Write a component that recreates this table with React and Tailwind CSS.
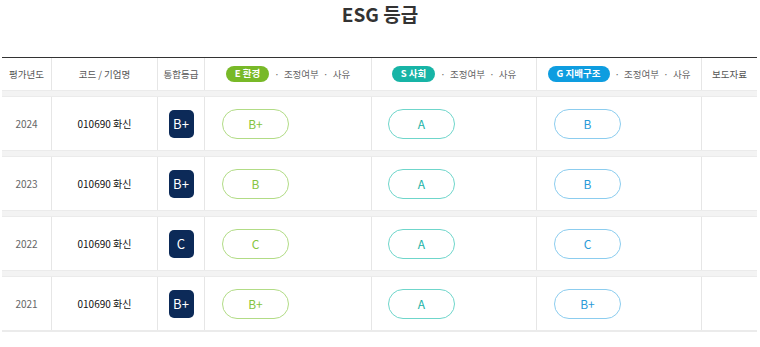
import React from 'react';

const rows = [
    { year: '2024', total: 'B+', e: 'B+', s: 'A', g: 'B' },
    { year: '2023', total: 'B+', e: 'B', s: 'A', g: 'B' },
    { year: '2022', total: 'C', e: 'C', s: 'A', g: 'C' },
    { year: '2021', total: 'B+', e: 'B+', s: 'A', g: 'B+' },
];

const cols = 'grid grid-cols-[50px_106px_47px_167px_165px_165px_55px]';
const cell = 'border-r border-[#e6e6e6] flex items-center';

function HeadTag({ label, color }) {
    return (
        <div className="flex items-center justify-center gap-[5px] w-full">
            <span className={`${color} text-white text-[9.5px] font-bold h-[16px] px-[9px] rounded-full flex items-center leading-none`}>{label}</span>
            <span className="text-[9.5px] text-[#666]">·&nbsp; 조정여부 &nbsp;·&nbsp; 사유</span>
        </div>
    );
}

function GradePill({ value, tone }) {
    return (
        <div className={`w-[67px] h-[30px] rounded-full border-[1.5px] flex items-center justify-center text-[12px] ${tone}`}>
            {value}
        </div>
    );
}

export default function App() {
    return (
        <div className="w-[760px] h-[347px] bg-white overflow-hidden" style={{ fontFamily: '"Noto Sans CJK KR", "Noto Sans", sans-serif' }}>
            <div className="h-[57px] flex justify-center pt-[1px]">
                <h1 className="text-[19px] font-bold text-[#333] leading-[26px]">ESG 등급</h1>
            </div>

            <div className="ml-[2px] w-[755px] border-t-[1.5px] border-[#333]">
                <div className={`${cols} h-[32px] text-[9.5px] text-[#555]`}>
                    <div className={`${cell} justify-center`}>평가년도</div>
                    <div className={`${cell} justify-center`}>코드 / 기업명</div>
                    <div className={`${cell} justify-center`}>통합등급</div>
                    <div className={cell}><HeadTag label="E 환경" color="bg-[#78b928]" /></div>
                    <div className={cell}><HeadTag label="S 사회" color="bg-[#17b4a6]" /></div>
                    <div className={cell}><HeadTag label="G 지배구조" color="bg-[#0e9de0]" /></div>
                    <div className="flex items-center justify-center">보도자료</div>
                </div>

                {rows.map((row) => (
                    <div key={row.year}>
                        <div className="h-[7px] bg-[#f3f3f3] border-y border-[#ebebeb]" />
                        <div className={`${cols} h-[53px]`}>
                            <div className={`${cell} justify-center text-[10px] text-[#666]`}>{row.year}</div>
                            <div className={`${cell} justify-center text-[10px] text-[#111]`}>010690 화신</div>
                            <div className={`${cell} justify-center`}>
                                <div className="w-[25px] h-[28px] rounded-[5px] bg-[#0c2a58] text-white text-[13px] flex items-center justify-center">{row.total}</div>
                            </div>
                            <div className={`${cell} pl-[17px]`}><GradePill value={row.e} tone="border-[#b2dc86] text-[#86c440]" /></div>
                            <div className={`${cell} pl-[16px]`}><GradePill value={row.s} tone="border-[#6fd6cb] text-[#22b2a5]" /></div>
                            <div className={`${cell} pl-[17px]`}><GradePill value={row.g} tone="border-[#8ccdef] text-[#2a9bd8]" /></div>
                            <div />
                        </div>
                    </div>
                ))}
                <div className="h-[2px] bg-[#ebebeb]" />
            </div>
        </div>
    );
}
